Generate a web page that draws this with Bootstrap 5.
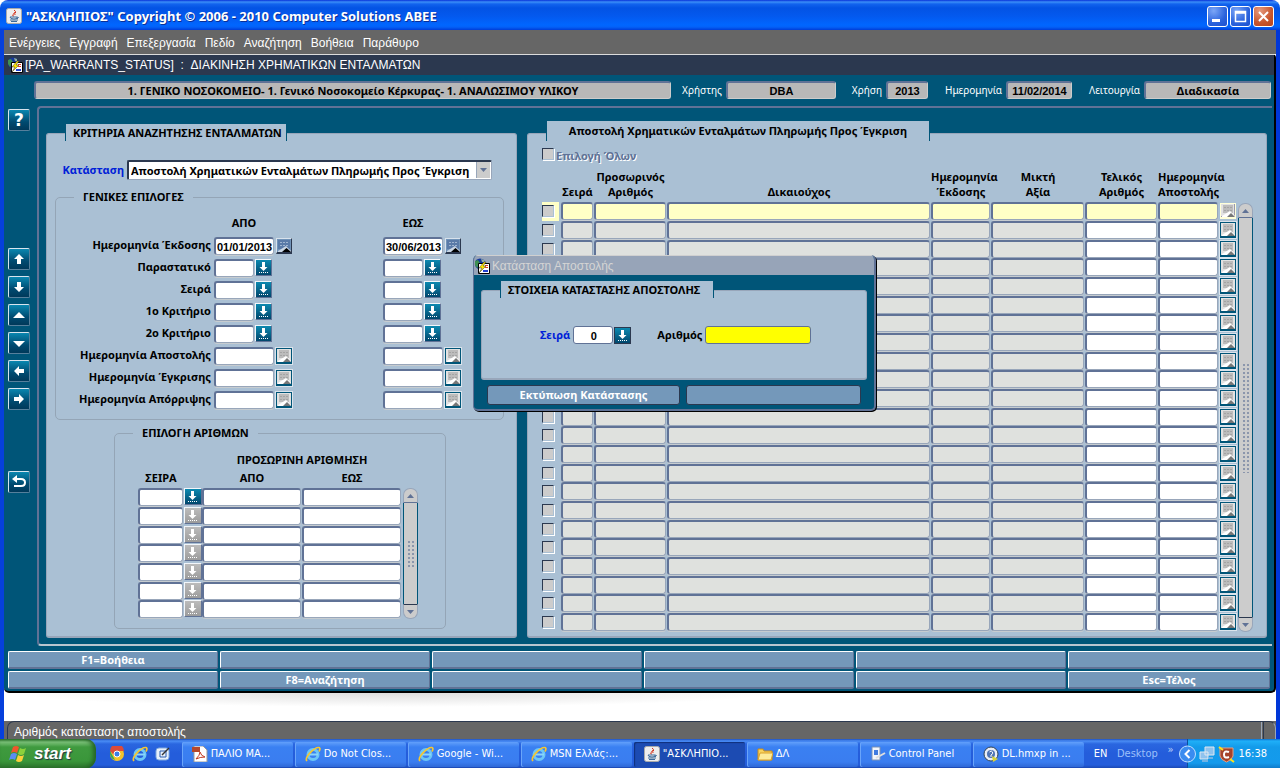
<!DOCTYPE html>
<html lang="el">
<head>
<meta charset="utf-8">
<meta name="viewport" content="width=device-width, initial-scale=1">
<title>ΑΣΚΛΗΠΙΟΣ</title>
<link href="https://cdn.jsdelivr.net/npm/bootstrap@5.3.0/dist/css/bootstrap.min.css" rel="stylesheet">
<style>
:root{--teal:#005578;--pane:#aac0d4;--edge:#607296;--soft:#98a6ba;--lite:#cacaca;--steel:#7498ba;--ink:#2b384f}
body{font:bold 11px/16px "Noto Sans","Open Sans",sans-serif;color:#000;background:#fff}
button,input,select{font:inherit;border-radius:0}
button{padding:0;border:0;background:none}
svg{display:block;flex:none}
.plain{font-family:"Liberation Sans",sans-serif;font-weight:400}
/* window chrome */
.titlebar{height:30px;padding:2px 6px 0;border-radius:8px 8px 0 0;background:linear-gradient(#0831d9 0,#3b8ef8 2px,#1263ee 4px,#0353e4 8px,#0459ee 16px,#0066ff 25px,#0461f8 27px,#003dd7 30px);color:#fff;font-size:13px;text-shadow:1px 1px 0 #0a2f96}
.winbtns{gap:2px}
.winbtn{width:21px;height:21px;border:1px solid #fff;border-radius:3px;background:radial-gradient(circle at 30% 20%,#7ba6f7,#2a62dc 60%,#1d4fce)}
.winbtn.shut{background:radial-gradient(circle at 30% 20%,#e59a7e,#c8552c 60%,#b7441c)}
.frame{border-left:4px solid #0640dc;border-right:4px solid #0037d8;background:#fff}
.menubar{height:24px;background:#666;padding:2px 0 0 5px;gap:9px;font-size:12px;color:#fff}
.menubar a{color:#fff;text-decoration:none}
.appwin{background:var(--teal);border-top:1px solid #dcdcdc;border-right:2px solid #000;border-bottom:2px solid #000;border-radius:0 4px 5px 5px;padding-bottom:2px}
.docbar{height:20px;background:var(--ink);color:#fff;font-size:12px;padding-left:3px;gap:2px}
.infobar{padding:6px 3px 0 30px;height:24px;color:#fff;font-size:10px}
.infobar output{height:18px;line-height:15px;border:2px solid var(--edge);border-right:1px solid #ccc;border-bottom:1px solid #ccc;border-radius:3px;background:#b8b8b8;color:#000;font-size:11px;text-align:center}
.infobar output.num,.fld{font-family:"Liberation Sans",sans-serif}
.infobar output.num{line-height:16px}
.infobar label{font-weight:400;text-align:right;margin-right:4px;line-height:18px;white-space:nowrap}
/* tool strip */
.strip{flex:none;width:33px;padding:3px 0 0 4px}
.toolbtn{width:22px;height:22px;border:1px solid #d8e4ee;border-right-color:#56809c;border-bottom-color:#56809c;border-radius:2px;background:linear-gradient(#0a87b0,#004a70 60%,#00395a);margin-bottom:6px;display:block}
.toolbtn.first{margin-bottom:117px}
.toolbtn.endgrp{margin-bottom:61px}
.canvasarea{min-width:0;border:2px solid var(--edge);border-right:0;border-bottom:2px solid #b9c5cf;border-radius:4px 0 0 4px;padding:25px 5px 6px 7px;margin-right:2px;column-gap:10px}
.pane{background:var(--pane);border:1px solid var(--soft);border-width:1px 1px 2px 1px;border-radius:3px}
.pane-l{flex:0 0 471px}
.tabcap{background:var(--pane);border:solid var(--teal);border-width:0 1px;font-size:11px;font-weight:700;line-height:18px;margin:-10px 0 0 18px;padding-left:7px;height:17px;white-space:nowrap}
.tabcap.tall{margin-top:-13px;height:20px;line-height:20px;text-align:center;padding:0}
/* fields */
.fld{display:block;width:100%;height:18px;padding:1px 0 0 1px;background:#fff;border:solid var(--edge);border-width:2px 1px 1px 2px;border-right-color:var(--soft);border-bottom-color:var(--soft);border-radius:3px;box-shadow:0 1px 0 #c6ccd0;color:#000}
.w-date{width:60px}.w-code{width:40px}
.blue{color:#0020d8}
.pick{display:block;width:17px;height:17px;border:1px solid #f2f6fa;border-right-color:var(--edge);border-bottom-color:var(--edge);background:linear-gradient(#0c89b0,#00466c)}
.pick.off{background:linear-gradient(#bcbcbc,#9b9b9b)}
.pick.cal{width:16px;height:16px;margin:1px 0 0 1px;background:#e2e2e2;border:1px solid var(--teal);border-bottom-width:2px;box-shadow:0 0 0 1px #dbe4ec;overflow:hidden}
.pick.cal.live{background:#7193b8;border-color:#d8e2ec var(--ink) var(--ink) #d8e2ec;box-shadow:none}
.statesel{width:365px;height:20px;appearance:none;background:#fff;border:2px solid var(--ink);border-width:2px 1px 1px 2px;border-radius:2px;padding:0 16px 0 2px;border-right-color:var(--soft);border-bottom-color:var(--soft)}
.selbtn{right:2px;top:2px;width:14px;height:16px;background:#ccc;border-left:1px solid var(--soft);pointer-events:none}
.grp{border:1px solid #94a5b6;border-radius:5px;min-width:0}
.grp legend{float:none;width:auto;margin:0 0 0 18px;padding:0 9px;font-size:11px;line-height:14px}
.critgrid{display:grid;grid-template-columns:155px 166px 1fr;column-gap:3px;grid-auto-rows:22px;padding:11px 0 6px}
.critgrid .hd{height:16px;text-align:center}
.critgrid label{text-align:right}
.grid{border-collapse:separate;border-spacing:0;table-layout:fixed}
.grid th{padding:0 0 3px;vertical-align:bottom;line-height:15px;text-align:center;white-space:nowrap}
.grid tbody tr{height:19px}
.grid tbody tr:nth-child(3n){height:18px}
.grid td{vertical-align:top;padding:0 1px 0 0;line-height:15px}
.grid .fld{height:18px}
.nums th{height:18px}
.nums .pick{width:18px}
.list .fld[readonly]{background:#dfe1de}
.list tr:first-child .fld{background:#ffffc6}
.tick{display:block;appearance:none;width:12px;height:12px;margin:3px 0 0;border:1px solid var(--ink);border-right:1px solid var(--pane);border-bottom:1px solid var(--pane);box-shadow:1px 1px 0 #fff;background:#ccc}
.list tr:first-child .tickcell{background:linear-gradient(90deg,#ffffc6 17px,transparent 17px)}
.list tr:first-child .cal{border-color:#ffffd8;box-shadow:inset -1px -1px 0 #99a}
.sbar{width:15px;flex:none}
.sbar button{width:15px;height:15px;background:#ccc;border:1px solid var(--soft);border-bottom-color:var(--edge);border-radius:7px 7px 0 0}
.sbar button:last-child{border-radius:0 0 7px 7px;border-color:var(--ink) var(--soft) var(--soft)}
.sbar svg{margin:0 auto}
.track{background:#ccc;border:solid var(--teal);border-width:0 1px}
.nub{width:8px;background:radial-gradient(circle,#607296 1px,transparent 1px) 0 0/4px 4px;opacity:.6}
.fkeys{display:grid;grid-template-columns:repeat(5,210fr) 202fr;gap:2px;padding:5px 4px 0}
.fkey{height:18px;line-height:15px;background:var(--steel);border:1px solid #fff;border-right:1px solid var(--edge);border-bottom:2px solid var(--edge);border-radius:2px;color:#fff}
/* dialog over the form */
.dlg{left:469px;top:225px;width:403px;background:var(--teal);border:solid var(--edge);border-width:0 2px 2px 1px;border-radius:5px;box-shadow:1px 1px 0 #000;overflow:hidden}
.dlg-cap{height:20px;background:#97a4b8;border-top:1px solid #d0d0d0;color:#d4d4d4;font-size:12px;padding-left:0;gap:2px}
.dlg-pane{margin:15px 7px 0;height:90px}
.dlg .fld{border:1px solid var(--edge);box-shadow:none}
.dlgbtn{height:20px;background:var(--steel);border:1px solid var(--ink);border-radius:3px;color:#fff}
.blank{height:28px;background:radial-gradient(ellipse 380px 14px at 390px 0,#dedede,#fff)}
.statusbar{height:18px;background:#666;color:#fff;font-size:12px;padding-left:3px}
.statusbar div{border:1px solid var(--ink);border-bottom:0;border-radius:7px 7px 0 0;height:18px;line-height:20px;padding-left:6px;border-right-color:#9aa6b8}
.statusbar div::after{content:"";float:right;height:17px;width:3px;border:solid #9aa6b8;border-width:0 0 0 1px;border-right:1px solid var(--ink);margin-right:11px}
/* taskbar */
.taskbar{height:30px;background:linear-gradient(#1c4fc0 0,#4a8df5 2px,#2a66e0 5px,#245ddb 14px,#245ddb 26px,#1941a5 30px);color:#fff;font:400 11px/16px "DejaVu Sans Condensed",sans-serif}
.startbtn{width:96px;height:30px;border-radius:0 10px 12px 0;background:linear-gradient(#2f7a2f 0,#7cc27a 3px,#3f9a3f 8px,#3a963a 22px,#2a6e2a 30px);box-shadow:inset -3px 0 4px #256325;color:#fff;font:italic bold 17px/28px "Liberation Sans",sans-serif;text-shadow:1px 1px 1px #234;padding-left:9px;gap:5px}
.task{width:111px;height:25px;margin-right:2px;border-radius:2px;padding-left:10px;gap:3px;color:#fff;background:linear-gradient(#62a0fb,#3a80f2 5px,#3a7df0 20px,#2f68d6);box-shadow:inset 1px 0 0 #6aa5fa}
.task.on{background:#1c4bb2;box-shadow:inset 1px 1px 1px #10307a}
.tray{background:linear-gradient(#0d6fd0 0,#1fb0f8 2px,#139bea 8px,#149aec 24px,#0e75c4 30px);border-left:1px solid #0b4f9c;flex:1}
</style>
</head>
<body>
<svg width="0" height="0" class="position-absolute" aria-hidden="true">
<symbol id="lov" viewBox="0 0 15 15"><path d="M6 2h3v5h2.500L7.500 11 3.500 7H6z" fill="#fff"/><path d="M3 12.500h10" stroke="#fff" stroke-dasharray="1 1"/></symbol>
<symbol id="cal" viewBox="0 0 15 15"><path d="M2 1h10v8H2z" fill="#bcbcbc"/><path d="M3 3.500h8M3 6.500h8" stroke="#a4a4a4" stroke-dasharray="2 1"/><path d="M1 13V12L9 7l5 5v1z" fill="#fff"/><path d="M6 13 10 9 14 13z" fill="#777"/></symbol>
<symbol id="calon" viewBox="0 0 15 15"><path d="M1 1h12v9H1z" fill="#5a7ba8"/><path d="M3 3.500h8M3 6.500h8" stroke="#9fb4d0" stroke-dasharray="2 1"/><path d="M1 13V12L9 7l5 5v1z" fill="#c9d6e4"/><path d="M5 13 9.500 9 14 13z" fill="#000"/></symbol>
<symbol id="java" viewBox="0 0 16 16"><rect x=".5" y=".5" width="15" height="15" rx="2" fill="#eee" stroke="#aaa"/><path d="M8 2q3 1 0 3.500T8 8M10 4q-2 1-1 3" stroke="#d3331c" fill="none"/><path d="M4 9h7v1.500q-3 1-6 0zM11 9q3 0 0 2M4 12h8M5 13.500h6" stroke="#3c6a9a" fill="none"/></symbol>
<symbol id="form" viewBox="0 0 16 16"><path d="M2 2Q6-1 10 2l1 4-7 5Q-1 8 2 2z" fill="#16389c"/><path d="M1 3l3-1 2 3-3 5-2-3z" fill="#3f8f54"/><path d="M7 1l3 1v2H8z" fill="#8fb0a0"/><path d="M4.500 5.500h11v10h-11z" fill="#fff" stroke="#000"/><path d="M11 7.500h3M11 9.500h3" stroke="#e04020"/><path d="M9 13h5" stroke="#2040d0" stroke-width="2"/><path d="M10 4 5 10h3l-3 5 7-7H9l3-4z" fill="#ffe800" stroke="#333" stroke-width=".5"/></symbol>
<symbol id="ie" viewBox="0 0 16 16"><circle cx="8" cy="8.500" r="5" fill="none" stroke="#6cc7f6" stroke-width="3"/><path d="M4 8.500h9" stroke="#8bd6fb" stroke-width="2"/><path d="M2 15C-1 12 9 1 14 1.500c2 .5 0 4 0 4" fill="none" stroke="#f6c62f" stroke-width="1.700"/></symbol>
<symbol id="up" viewBox="0 0 7 4"><path d="M0 4 3.500 0 7 4z" fill="#607296"/></symbol>
<symbol id="dn" viewBox="0 0 7 4"><path d="M0 0 3.500 4 7 0z" fill="#607296"/></symbol>
</svg>

<header class="titlebar d-flex align-items-center">
  <svg width="16" height="16" class="me-1"><use href="#java"/></svg>
  <span class="flex-grow-1">"ΑΣΚΛΗΠΙΟΣ" Copyright © 2006 - 2010 Computer Solutions ABEE</span>
  <div class="winbtns d-flex">
    <button class="winbtn" aria-label="Minimize"><svg width="19" height="19"><path d="M4 12h8v3H4z" fill="#fff"/></svg></button>
    <button class="winbtn" aria-label="Maximize"><svg width="19" height="19"><path d="M4.500 4.500h10v10h-10zM4 6h11" fill="none" stroke="#fff" stroke-width="1.500"/></svg></button>
    <button class="winbtn shut" aria-label="Close"><svg width="19" height="19"><path d="M5 5l9 9M14 5l-9 9" stroke="#fff" stroke-width="2"/></svg></button>
  </div>
</header>

<div class="frame position-relative">
  <nav class="menubar plain d-flex align-items-center" id="menus"></nav>
  <main class="appwin">
    <div class="docbar plain d-flex align-items-center"><svg width="16" height="16"><use href="#form"/></svg><span>[PA_WARRANTS_STATUS] &nbsp;:&nbsp; ΔΙΑΚΙΝΗΣΗ ΧΡΗΜΑΤΙΚΩΝ ΕΝΤΑΛΜΑΤΩΝ</span></div>
    <div class="infobar d-flex">
      <output class="flex-grow-1">1. ΓΕΝΙΚΟ ΝΟΣΟΚΟΜΕΙΟ- 1. Γενικό Νοσοκομείο Κέρκυρας- 1. ΑΝΑΛΩΣΙΜΟΥ ΥΛΙΚΟΥ</output>
      <label for="o1" style="width:51px">Χρήστης</label><output id="o1" class="num" style="width:110px">DBA</output>
      <label for="o2" style="width:46px">Χρήση</label><output id="o2" class="num" style="width:42px">2013</output>
      <label for="o3" style="width:74px">Ημερομηνία</label><output id="o3" class="num" style="width:66px">11/02/2014</output>
      <label for="o4" style="width:68px">Λειτουργία</label><output id="o4" style="width:127px">Διαδικασία</output>
    </div>
    <div class="d-flex" style="margin-top:7px">
      <div class="strip">
        <button class="toolbtn first" aria-label="Βοήθεια"><svg width="20" height="20"><text x="10" y="16" text-anchor="middle" fill="#fff" font-family="DejaVu Sans" font-size="17" font-weight="bold">?</text></svg></button>
        <button class="toolbtn" aria-label="Πρώτη"><svg width="20" height="20"><path d="M10 5 15 10h-3v5H8v-5H5z" fill="#fff"/></svg></button>
        <button class="toolbtn" aria-label="Τελευταία"><svg width="20" height="20"><path d="M10 15 15 10h-3V5H8v5H5z" fill="#fff"/></svg></button>
        <button class="toolbtn" aria-label="Προηγούμενη"><svg width="20" height="20"><path d="M4 13 10 7l6 6z" fill="#fff"/></svg></button>
        <button class="toolbtn" aria-label="Επόμενη"><svg width="20" height="20"><path d="M4 8l6 6 6-6z" fill="#fff"/></svg></button>
        <button class="toolbtn" aria-label="Αριστερά"><svg width="20" height="20"><path d="M5 10 10 5v3h5v4h-5v3z" fill="#fff"/></svg></button>
        <button class="toolbtn endgrp" aria-label="Δεξιά"><svg width="20" height="20"><path d="M15 10 10 5v3H5v4h5v3z" fill="#fff"/></svg></button>
        <button class="toolbtn" aria-label="Επιστροφή"><svg width="20" height="20"><path d="M6 7h6q4 0 4 3.500T12 14H5" fill="none" stroke="#fff" stroke-width="2"/><path d="M3 7l5-4v8z" fill="#fff"/></svg></button>
      </div>
      <div class="canvasarea d-flex flex-grow-1">
        <section class="pane pane-l">
          <h2 class="tabcap" style="width:222px">ΚΡΙΤΗΡΙΑ ΑΝΑΖΗΤΗΣΗΣ ΕΝΤΑΛΜΑΤΩΝ</h2>
          <div class="d-flex align-items-center" style="padding-top:19px">
            <label for="state" class="blue text-end" style="width:77px;margin-right:3px">Κατάσταση</label>
            <div class="position-relative"><select id="state" class="statesel d-block"><option>Αποστολή Χρηματικών Ενταλμάτων Πληρωμής Προς Έγκριση</option></select>
            <span class="selbtn position-absolute d-flex align-items-center justify-content-center"><svg width="7" height="4"><use href="#dn"/></svg></span></div>
          </div>
          <fieldset class="grp" style="margin:10px 12px 0 8px">
            <legend>ΓΕΝΙΚΕΣ ΕΠΙΛΟΓΕΣ</legend>
            <div class="critgrid" id="crit"><span></span><span class="hd w-date">ΑΠΟ</span><span class="hd w-date">ΕΩΣ</span></div>
          </fieldset>
          <fieldset class="grp" style="margin:6px 70px 0 67px">
            <legend>ΕΠΙΛΟΓΗ ΑΡΙΘΜΩΝ</legend>
            <div class="d-flex align-items-end" style="padding:12px 0 9px 23px;column-gap:1px">
              <table class="grid nums" style="width:264px">
                <colgroup><col style="width:46px"><col style="width:18px"><col style="width:100px"><col style="width:100px"></colgroup>
                <thead><tr><th colspan="2"></th><th colspan="2">ΠΡΟΣΩΡΙΝΗ ΑΡΙΘΜΗΣΗ</th></tr>
                <tr><th>ΣΕΙΡΑ</th><th></th><th>ΑΠΟ</th><th>ΕΩΣ</th></tr></thead>
                <tbody id="nums"></tbody>
              </table>
              <div class="sbar d-flex flex-column" style="height:131px"><button aria-label="Πάνω"><svg width="7" height="4"><use href="#up"/></svg></button><div class="track flex-grow-1 d-flex align-items-center justify-content-center"><span class="nub" style="height:28px"></span></div><button aria-label="Κάτω"><svg width="7" height="4"><use href="#dn"/></svg></button></div>
            </div>
          </fieldset>
        </section>
        <section class="pane flex-grow-1">
          <h2 class="tabcap tall" style="width:384px">Αποστολή Χρηματικών Ενταλμάτων Πληρωμής Προς Έγκριση</h2>
          <div style="padding:7px 13px 4px 14px">
            <div class="d-flex" style="height:15px"><input type="checkbox" class="tick mt-0" id="all"><label for="all" style="color:#607296;text-shadow:1px 1px 0 #fff;margin-left:2px">Επιλογή Όλων</label></div>
            <div class="d-flex align-items-end" style="margin-top:6px;column-gap:1px">
              <table class="grid list w-100">
                <colgroup><col style="width:19px"><col style="width:33px"><col style="width:73px"><col><col style="width:60px"><col style="width:94px"><col style="width:73px"><col style="width:61px"><col style="width:18px"></colgroup>
                <thead><tr><th></th><th>Σειρά</th><th>Προσωρινός<br>Αριθμός</th><th>Δικαιούχος</th><th>Ημερομηνία<br>Έκδοσης</th><th>Μικτή<br>Αξία</th><th>Τελικός<br>Αριθμός</th><th>Ημερομηνία<br>Αποστολής</th><th></th></tr></thead>
                <tbody id="rows"></tbody>
              </table>
              <div class="sbar d-flex flex-column" style="height:429px"><button aria-label="Πάνω"><svg width="7" height="4"><use href="#up"/></svg></button><div class="track flex-grow-1 d-flex align-items-center justify-content-center"><span class="nub" style="height:110px"></span></div><button aria-label="Κάτω"><svg width="7" height="4"><use href="#dn"/></svg></button></div>
            </div>
          </div>
        </section>
      </div>
    </div>
    <div class="fkeys" id="keys"></div>
  </main>
  <div class="dlg position-absolute" role="dialog" aria-label="Κατάσταση Αποστολής">
    <div class="dlg-cap plain d-flex align-items-center"><svg width="16" height="16"><use href="#form"/></svg>Κατάσταση Αποστολής</div>
    <div class="pane dlg-pane">
      <h2 class="tabcap" style="width:214px">ΣΤΟΙΧΕΙΑ ΚΑΤΑΣΤΑΣΗΣ ΑΠΟΣΤΟΛΗΣ</h2>
      <div class="d-flex align-items-center" style="padding:28px 0 0 58px">
        <label class="blue" for="ds" style="margin-right:3px">Σειρά</label><input class="fld w-code text-center" id="ds" value="0"><button class="pick" style="margin:0 26px 0 1px;border-color:#2b384f" aria-label="Λίστα"><svg width="15" height="15"><use href="#lov"/></svg></button>
        <label for="dn1" style="margin-right:2px">Αριθμός</label><input id="dn1" class="fld" style="width:106px;background:#ff0">
      </div>
    </div>
    <div class="d-flex" style="padding:5px 13px 4px;gap:6px"><button class="dlgbtn" style="flex:193">Εκτύπωση Κατάστασης</button><button class="dlgbtn" style="flex:175" aria-label="Κενό"></button></div>
  </div>
  <div class="blank"></div>
  <div class="statusbar plain"><div>Αριθμός κατάστασης αποστολής</div></div>
</div>

<footer class="taskbar d-flex">
  <button class="startbtn d-flex align-items-center"><svg width="20" height="20"><path d="M4 3q3-2 6 0L8 9Q5 7 2 9z" fill="#f0562c"/><path d="M11 4q3 2 6 0l-2 6q-3 2-6 0z" fill="#8bd13c"/><path d="M2 10q3-2 6 0l-2 6q-3-2-6 0z" fill="#5b8df2"/><path d="M9 11q3 2 6 0l-2 6q-3 2-6 0z" fill="#fbd03a"/></svg>start</button>
  <div class="d-flex align-items-center" style="width:86px;gap:7px;padding-left:13px">
    <svg width="16" height="16"><circle cx="8" cy="8" r="7" fill="#f3c32c"/><path d="M1 5A7 7 0 0 1 15 5H8L5 9z" fill="#dd4b39"/><path d="M1 5 6 14Q0 12 1 5z" fill="#3aa757"/><circle cx="8" cy="8" r="3" fill="#3a7de8" stroke="#fff"/></svg>
    <svg width="16" height="16"><use href="#ie"/></svg>
    <svg width="16" height="16"><rect x="1" y="2" width="13" height="12" rx="3" fill="#e8f1fb" stroke="#7ea8dd"/><path d="M5 5h6v6H5z" fill="none" stroke="#2b5dae"/><path d="M7 9l7-7" stroke="#333" stroke-width="1.500"/></svg>
  </div>
  <div class="d-flex align-items-center" id="tasks"></div>
  <div class="d-flex align-items-center justify-content-between" style="width:102px;padding:0 14px 0 8px"><span>EN</span><span style="color:#9cc0fa">Desktop</span><span class="pb-2" style="color:#b9d2fb">»</span></div>
  <div class="tray d-flex align-items-center" style="gap:3px">
    <svg width="17" height="18" style="margin-left:-9px"><circle cx="8.500" cy="9" r="8" fill="#3a8cf0" stroke="#bfe0ff"/><path d="M10.500 5 6.500 9l4 4" fill="none" stroke="#fff" stroke-width="2"/></svg>
    <svg width="16" height="16"><path d="M6 1h9v8H6zM1 6h8v7H1z" fill="#8fc3ee" stroke="#dfe8f0"/><path d="M3 15h6M10 12h4" stroke="#ccd"/></svg>
    <svg width="17" height="17"><path d="M2 2h13v8q-1 4-6.500 6Q3 14 2 10z" fill="#a5432c" stroke="#e8a080"/><path d="M11 6Q6 4 6 8.500T11 11" fill="none" stroke="#fff" stroke-width="2"/><path d="M1 1l4 3M16 16l-4-3" stroke="#ffe21a" stroke-width="2"/></svg>
    <span class="ms-auto" style="margin-right:13px">16:38</span>
  </div>
</footer>
<script src="https://cdn.jsdelivr.net/npm/bootstrap@5.3.0/dist/js/bootstrap.bundle.min.js"></script>
<script>
const $=id=>document.getElementById(id);
const ico=(n,w=15)=>`<svg width="${w}" height="${w}"><use href="#${n}"/></svg>`;
$('menus').innerHTML=['Ενέργειες','Εγγραφή','Επεξεργασία','Πεδίο','Αναζήτηση','Βοήθεια','Παράθυρο'].map(t=>`<a href="#">${t}</a>`).join('');
const lov=off=>`<button class="pick ${off?'off':''}" aria-label="Λίστα">${ico('lov')}</button>`;
const cal=live=>`<button class="pick cal ${live?'live':''}" aria-label="Ημερολόγιο">${ico(live?'calon':'cal')}</button>`;
[['Ημερομηνία Έκδοσης','01/01/2013','30/06/2013'],['Παραστατικό'],['Σειρά'],['1ο Κριτήριο'],['2ο Κριτήριο'],['Ημερομηνία Αποστολής','',''],['Ημερομηνία Έγκρισης','',''],['Ημερομηνία Απόρριψης','','']].forEach((r,i)=>{
  const date=r.length>1;
  $('crit').insertAdjacentHTML('beforeend',`<label for="c${i}a">${r[0]}</label>`+['a','b'].map((k,j)=>`<div class="d-flex" style="gap:1px"><input class="fld ${date?'w-date':'w-code'}" id="c${i}${k}" aria-label="${r[0]}" value="${r[j+1]||''}">${date?cal(!!r[1]):lov()}</div>`).join(''));
});
const f=ro=>`<td><input class="fld" aria-label="Τιμή"${ro?' readonly':''}></td>`;
for(let i=0;i<7;i++)$('nums').insertAdjacentHTML('beforeend',`<tr>${f()}<td>${lov(i)}</td>${f()}${f()}</tr>`);
for(let i=0;i<23;i++)$('rows').insertAdjacentHTML('beforeend',`<tr><td class="tickcell"><input type="checkbox" class="tick" aria-label="Επιλογή"></td>${f(1).repeat(5)}${f().repeat(2)}<td>${cal()}</td></tr>`);
$('keys').innerHTML=['F1=Βοήθεια','','','','','','','F8=Αναζήτηση','','','','Esc=Τέλος'].map(t=>`<button class="fkey" aria-label="${t||'Κενό'}">${t}</button>`).join('');
const pics={
 pdf:'<svg width="16" height="16"><path d="M2 0h9l4 4v12H2z" fill="#fff" stroke="#999"/><path d="M0 1h8v5H0z" fill="#b5482c"/><path d="M4 13q4-4 4-7 1 4 5 5-5 0-9 2z" fill="none" stroke="#c23a22"/></svg>',
 fold:'<svg width="16" height="16"><path d="M1 3h5l1 2h8v9H1z" fill="#f7d25c" stroke="#c98b1a"/><path d="M3 7h13l-2 7H1z" fill="#fdeb9b" stroke="#d9a12c"/></svg>',
 cp:'<svg width="16" height="16"><path d="M2 1h8v13H2z" fill="#f1f5fb" stroke="#7d93b5"/><path d="M4 4h4v5H4z" fill="#3f7be0"/><path d="M6 12l9-5" stroke="#ddd" stroke-width="2"/></svg>',
 help:'<svg width="16" height="16"><circle cx="8" cy="8" r="7" fill="#e9eef6" stroke="#345"/><circle cx="8" cy="8" r="4" fill="#4f74b4"/><path d="M6.500 6q2-2 3 0T8 9v2" stroke="#fff" fill="none"/><path d="M9 10l6 3-5 3z" fill="#d7d33a"/></svg>',
 ie:ico('ie',16),java:ico('java',16)};
$('tasks').innerHTML=[['pdf','ΠΑΛΙΟ ΜΑ...'],['ie','Do Not Clos...'],['ie','Google - Wi...'],['ie','MSN Ελλάς:...'],['java','"ΑΣΚΛΗΠΙΟ...',1],['fold','ΔΛ'],['cp','Control Panel'],['help','DL.hmxp in ...']].map(t=>`<button class="task d-flex align-items-center ${t[2]?'on':''}">${pics[t[0]]}<span>${t[1]}</span></button>`).join('');
</script>
</body>
</html>
